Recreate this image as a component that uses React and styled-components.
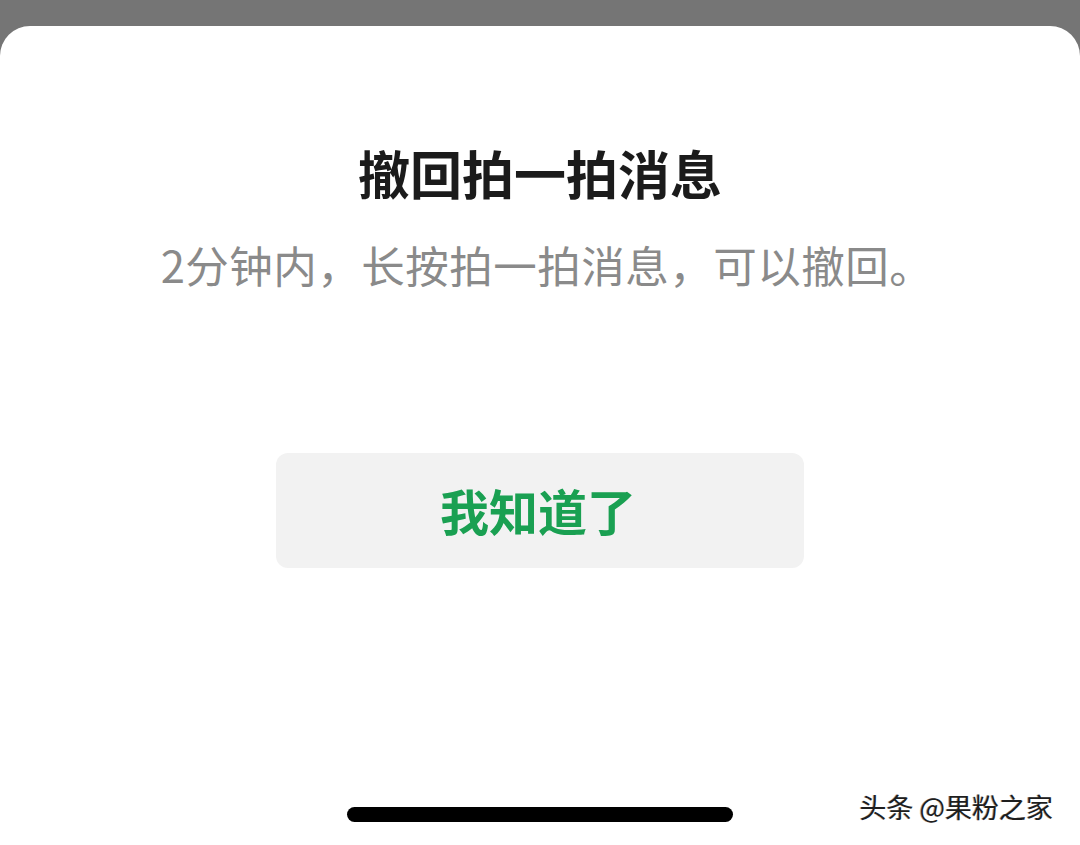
import styled, { createGlobalStyle } from "styled-components";

const GlobalStyle = createGlobalStyle`
  html, body {
    margin: 0;
    padding: 0;
    background: #757575;
  }
  body {
    font-family: "Noto Sans CJK SC", "Noto Sans", sans-serif;
  }
`;

function App() {
  return (
    <>
      <GlobalStyle />
      <Screen>
        <TopShade />
        <Sheet>
          <Title>撤回拍一拍消息</Title>
          <Subtitle>2分钟内，长按拍一拍消息，可以撤回。</Subtitle>
          <OkButton>我知道了</OkButton>
          <Bottom>
            <HomeBar />
            <Watermark>头条 @果粉之家</Watermark>
          </Bottom>
        </Sheet>
      </Screen>
    </>
  );
}

const Screen = styled.div`
  width: 1080px;
  height: 845px;
  display: flex;
  flex-direction: column;
  overflow: hidden;
`;

// dimmed page behind the sheet
const TopShade = styled.div`
  height: 26px;
  flex-shrink: 0;
  background: #757575;
`;

const Sheet = styled.div`
  flex: 1;
  background: #fff;
  border-radius: 30px 30px 0 0;
  display: flex;
  flex-direction: column;
  align-items: center;
  padding-top: 116px;
  position: relative;
`;

const Title = styled.div`
  font-size: 52px;
  line-height: 62px;
  font-weight: 700;
  color: #1b1b1b;
`;

const Subtitle = styled.div`
  margin-top: 35px;
  padding-left: 14px;
  font-size: 43.5px;
  line-height: 52px;
  letter-spacing: 0.5px;
  color: #8a8a8a;
`;

const OkButton = styled.button`
  margin-top: 162px;
  width: 528px;
  height: 115px;
  border: none;
  border-radius: 12px;
  background: #f2f2f2;
  color: #1aa052;
  font-family: "Noto Sans CJK SC", sans-serif;
  font-size: 49px;
  font-weight: 700;
  display: flex;
  align-items: center;
  justify-content: center;
  padding: 0 4px 2px 0;
`;

// home indicator area
const Bottom = styled.div`
  margin-top: auto;
  width: 100%;
  height: 45px;
  display: flex;
  justify-content: center;
  position: relative;
`;

const HomeBar = styled.div`
  width: 386px;
  height: 15px;
  margin-top: 7px;
  border-radius: 8px;
  background: #000;
`;

const Watermark = styled.div`
  position: absolute;
  right: 27px;
  top: -12px;
  font-size: 27px;
  line-height: 38px;
  color: #1e1e1e;
  text-shadow: 1px 1px 0 #fff, -1px 0 0 rgba(0, 0, 0, 0.35);
`;

export default App;
